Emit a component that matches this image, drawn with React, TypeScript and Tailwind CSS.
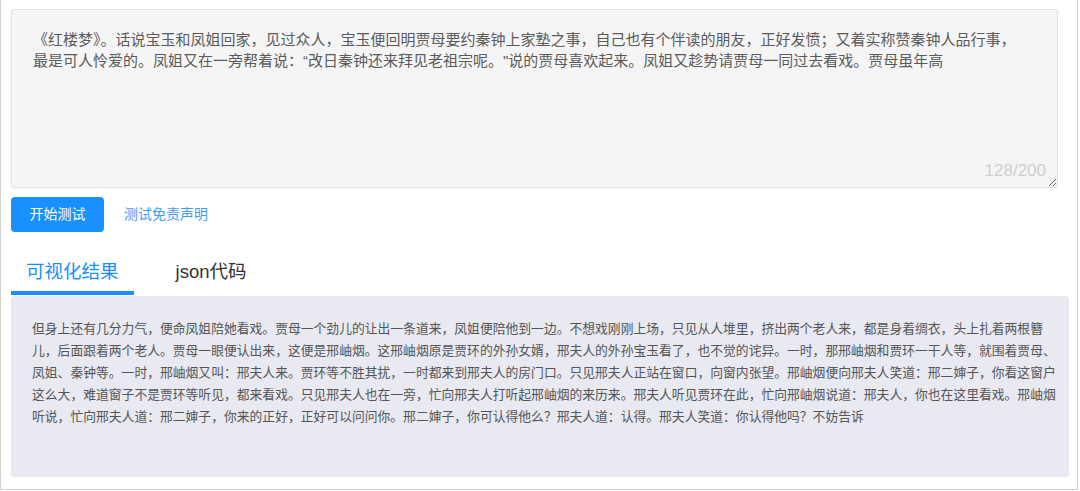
import { useState } from "react"

const inputText =
  "《红楼梦》。话说宝玉和凤姐回家，见过众人，宝玉便回明贾母要约秦钟上家塾之事，自己也有个伴读的朋友，正好发愤；又着实称赞秦钟人品行事，最是可人怜爱的。凤姐又在一旁帮着说：“改日秦钟还来拜见老祖宗呢。\"说的贾母喜欢起来。凤姐又趁势请贾母一同过去看戏。贾母虽年高"

const resultText =
  "但身上还有几分力气，便命凤姐陪她看戏。贾母一个劲儿的让出一条道来，凤姐便陪他到一边。不想戏刚刚上场，只见从人堆里，挤出两个老人来，都是身着绸衣，头上扎着两根簪儿，后面跟着两个老人。贾母一眼便认出来，这便是邢岫烟。这邢岫烟原是贾环的外孙女婿，邢夫人的外孙宝玉看了，也不觉的诧异。一时，那邢岫烟和贾环一干人等，就围着贾母、凤姐、秦钟等。一时，邢岫烟又叫：邢夫人来。贾环等不胜其扰，一时都来到邢夫人的房门口。只见邢夫人正站在窗口，向窗内张望。邢岫烟便向邢夫人笑道：邢二婶子，你看这窗户这么大，难道窗子不是贾环等听见，都来看戏。只见邢夫人也在一旁，忙向邢夫人打听起邢岫烟的来历来。邢夫人听见贾环在此，忙向邢岫烟说道：邢夫人，你也在这里看戏。邢岫烟听说，忙向邢夫人道：邢二婶子，你来的正好，正好可以问问你。邢二婶子，你可认得他么？邢夫人道：认得。邢夫人笑道：你认得他吗？不妨告诉"

const font = "font-['Liberation_Sans','Noto_Sans_CJK_SC',sans-serif]"

export default function App() {
  const [tab, setTab] = useState(0)

  return (
    <div className={`w-[1078px] h-[490px] bg-white border-l border-r border-b border-[#cfcfcf] pt-[9px] pl-[10px] ${font}`}>
      {/* Input */}
      <div className="relative w-[1047px]">
        <textarea
          readOnly
          value={inputText}
          className="block w-full h-[179px] bg-[#f5f5f5] border border-[#e3e3e3] rounded-[3px] pt-[19px] pl-[21px] pr-[30px] text-[15px] leading-[21px] text-[#5a5a5a] outline-none resize-y shadow-[0_1px_2px_rgba(0,0,0,0.05)]"
        />
        <span className="absolute right-[12px] bottom-[5px] text-[17px] text-[#cfcfcf]">128/200</span>
      </div>

      {/* Actions */}
      <div className="flex items-center mt-[9px]">
        <button className="w-[93px] h-[35px] rounded-[4px] bg-[#1890ff] text-white text-[14px]">开始测试</button>
        <a className="ml-[20px] text-[14px] text-[#3d9df2] cursor-pointer">测试免责声明</a>
      </div>

      {/* Tabs */}
      <div className="flex mt-[28px]">
        {["可视化结果", "json代码"].map((t, i) => (
          <div
            key={t}
            onClick={() => setTab(i)}
            className={`px-[15px] pb-[7px] text-[18.5px] leading-[24px] cursor-pointer border-b-4 ${
              i === 1 ? "ml-[27px]" : ""
            } ${tab === i ? "text-[#1890ff] border-[#1890ff]" : "text-[#333] border-transparent"}`}
          >
            {t}
          </div>
        ))}
      </div>

      {/* Result */}
      <div className="w-[1058px] h-[181px] mt-[1px] bg-[#e8e9f1] rounded-[4px] pt-[22px] pl-[21px] pr-[12px]">
        <p className="text-[12.8px] leading-[22px] text-[#555]">{tab === 0 ? resultText : "{ }"}</p>
      </div>
    </div>
  )
}
